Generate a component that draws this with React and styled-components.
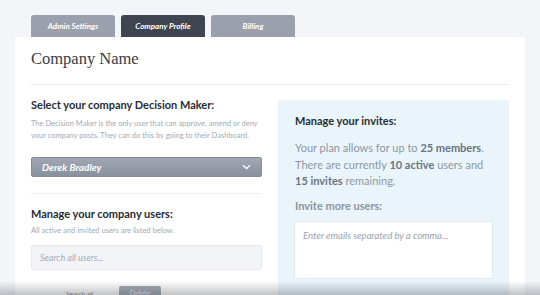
import styled, { createGlobalStyle } from "styled-components";

const GlobalStyle = createGlobalStyle`
  html, body {
    margin: 0;
    padding: 0;
    background: #f4f5f9;
    font-family: "Lato", "Open Sans", sans-serif;
    overflow: hidden;
  }
`;

const Page = styled.div`
  width: 540px;
  height: 295px;
  padding: 15px 15px 0 15px;
  box-sizing: border-box;
  position: relative;
  overflow: hidden;
`;

const Tabs = styled.div`
  display: flex;
  gap: 6px;
  padding-left: 16px;
`;

const Tab = styled.div`
  width: 84px;
  height: 22px;
  border-radius: 3px 3px 0 0;
  background: ${(p) => (p.$active ? "#3e4551" : "#9aa1ad")};
  color: #fff;
  font-size: 8px;
  font-style: italic;
  font-weight: 700;
  display: flex;
  align-items: center;
  justify-content: center;
`;

const Card = styled.div`
  background: #fff;
  padding: 10px 16px 0 16px;
  height: 260px;
`;

const Title = styled.h1`
  margin: 0;
  font-family: "Liberation Serif", serif;
  font-weight: 400;
  font-size: 16.5px;
  line-height: 24px;
  color: #363b46;
`;

const Divider = styled.hr`
  border: 0;
  border-top: 1px solid #eceef2;
  margin: ${(p) => p.$margin || "13px 0 0 0"};
`;

const Columns = styled.div`
  display: grid;
  grid-template-columns: 231px 231px;
  column-gap: 16px;
  margin-top: 13px;
  align-items: start;
`;

const Column = styled.div`
  display: flex;
  flex-direction: column;
`;

const Heading = styled.h2`
  margin: ${(p) => p.$margin || "0"};
  font-size: 11px;
  line-height: 14px;
  font-weight: 700;
  color: ${(p) => (p.$muted ? "#8a93a2" : "#272c36")};
`;

const Note = styled.p`
  margin: ${(p) => p.$margin || "6px 0 0 0"};
  font-size: 7.5px;
  line-height: 12px;
  color: #a3a9b4;
`;

const Select = styled.div`
  margin-top: 15px;
  height: 20px;
  border-radius: 2px;
  background: linear-gradient(#a0a7b3, #8a919e);
  border: 1px solid #858c98;
  box-sizing: border-box;
  display: flex;
  align-items: center;
  justify-content: space-between;
  padding: 0 10px;
  color: #fff;
  font-size: 10px;
  font-style: italic;
  font-weight: 700;
`;

const Search = styled.div`
  margin-top: 8px;
  height: 25px;
  box-sizing: border-box;
  background: #f3f4f8;
  border: 1px solid #e6e8ee;
  border-radius: 2px;
  display: flex;
  align-items: center;
  padding: 0 8px;
  font-size: 9px;
  font-style: italic;
  color: #a4aab6;
`;

const Actions = styled.div`
  margin-top: 16px;
  display: flex;
  align-items: center;
  gap: 26px;
  padding-left: 35px;
`;

const LinkText = styled.span`
  font-size: 6.5px;
  color: #7e8594;
`;

const SmallButton = styled.div`
  width: 42px;
  height: 14px;
  border-radius: 2px;
  background: #a3a9b4;
  color: #e9ebef;
  font-size: 7px;
  display: flex;
  align-items: center;
  justify-content: center;
`;

const Panel = styled.div`
  margin-top: 2px;
  background: #eaf5fb;
  border-radius: 2px;
  padding: 14px 16px 30px 17px;
  height: 200px;
  box-sizing: border-box;
`;

const Body = styled.p`
  margin: 12px 0 0 0;
  font-size: 11px;
  line-height: 16.5px;
  color: #8c95a5;

  b {
    color: #6a7384;
    font-weight: 700;
  }
`;

const TextArea = styled.div`
  margin-top: 8px;
  margin-left: -1px;
  height: 58px;
  background: #fff;
  border: 1px solid #dfe9ef;
  box-sizing: border-box;
  padding: 8px 8px;
  font-size: 9.5px;
  font-style: italic;
  color: #9aa1ad;
`;

const BottomShade = styled.div`
  position: absolute;
  left: 0;
  right: 0;
  bottom: 0;
  height: 14px;
  background: linear-gradient(rgba(60, 66, 74, 0), rgba(60, 66, 74, 0.32));
  pointer-events: none;
`;

function Chevron() {
  return (
    <svg width="9" height="6" viewBox="0 0 9 6">
      <path d="M1 1.2 L4.5 4.5 L8 1.2" fill="none" stroke="#fff" strokeWidth="1.3" />
    </svg>
  );
}

export default function App() {
  return (
    <Page>
      <GlobalStyle />
      <Tabs>
        <Tab>Admin Settings</Tab>
        <Tab $active>Company Profile</Tab>
        <Tab>Billing</Tab>
      </Tabs>
      <Card>
        <Title>Company Name</Title>
        <Divider />
        <Columns>
          <Column>
            <Heading>Select your company Decision Maker:</Heading>
            <Note>
              The Decision Maker is the only user that can approve, amend or deny
              your company posts. They can do this by going to their Dashboard.
            </Note>
            <Select>
              <span>Derek Bradley</span>
              <Chevron />
            </Select>
            <Divider $margin="16px 0 0 0" />
            <Heading $margin="13px 0 0 0">Manage your company users:</Heading>
            <Note $margin="4px 0 0 0">All active and invited users are listed below.</Note>
            <Search>Search all users...</Search>
            <Actions>
              <LinkText>Search all</LinkText>
              <SmallButton>Delete</SmallButton>
            </Actions>
          </Column>
          <Panel>
            <Heading>Manage your invites:</Heading>
            <Body>
              Your plan allows for up to <b>25 members</b>. There are currently{" "}
              <b>10 active</b> users and <b>15 invites</b> remaining.
            </Body>
            <Heading $muted $margin="9px 0 0 0">Invite more users:</Heading>
            <TextArea>Enter emails separated by a comma...</TextArea>
          </Panel>
        </Columns>
      </Card>
      <BottomShade />
    </Page>
  );
}
